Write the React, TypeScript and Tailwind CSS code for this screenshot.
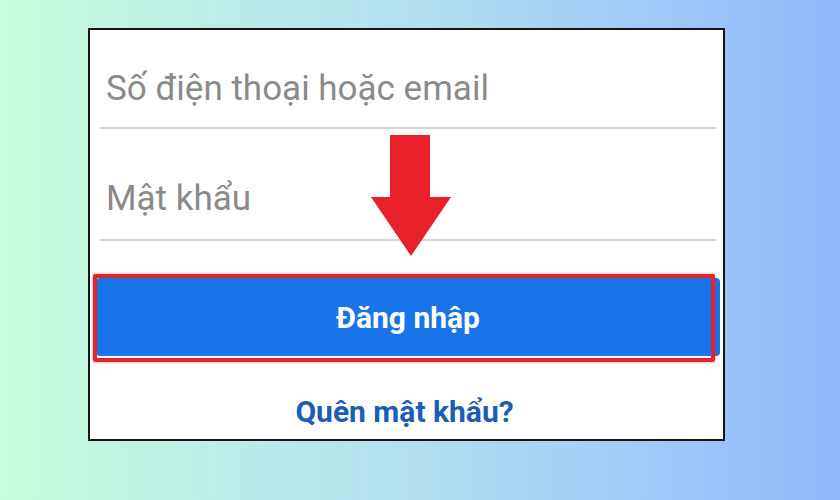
const font = { fontFamily: "Roboto, 'Noto Sans', sans-serif" }

function Field({ label, top, bottom }: { label: string; top: string; bottom: string }) {
  return (
    <div className={`ml-[10px] mr-[7px] border-b-2 border-[#d6d6d6] pl-[6px] ${top} ${bottom}`}>
      <div className="text-[35px] leading-[42px] text-[#8a8a8a]">{label}</div>
    </div>
  )
}

export default function App() {
  return (
    <div
      className="relative w-[840px] h-[500px] overflow-hidden bg-gradient-to-r from-[#c8fddc] via-[#b2def0] to-[#92b8fc] pt-[28px] pl-[88px]"
      style={font}
    >
      <div className="w-[637px] h-[413px] border-2 border-[#151515] bg-white flex flex-col">
        <Field label="Số điện thoại hoặc email" top="pt-[38px]" bottom="pb-[17px]" />
        <Field label="Mật khẩu" top="pt-[49px]" bottom="pb-[19px]" />

        {/* nút đăng nhập + khung đỏ đánh dấu */}
        <div className="relative mt-[37px] ml-[6px] mr-[3px]">
          <button className="w-full h-[78px] rounded-[4px] bg-[#1a74e9] text-white text-[30px] font-bold">
            Đăng nhập
          </button>
          <div className="absolute left-[-3px] right-[5px] top-[-4px] bottom-[-6px] border-[4px] border-[#e2262e] rounded-[2px] shadow-[0_0_3px_rgba(228,37,45,0.6)]" />
        </div>

        <div className="mt-[38px] text-center text-[30px] leading-[36px] font-bold text-[#1c5db6] pr-[4px]">
          Quên mật khẩu?
        </div>
      </div>

      {/* mũi tên đỏ */}
      <svg className="absolute left-[370px] top-[134px]" width="82" height="124" viewBox="0 0 82 124">
        <polygon points="20,1 60,1 60,63 81,63 41,122 1,63 20,63" fill="#e8202a" />
      </svg>
    </div>
  )
}
